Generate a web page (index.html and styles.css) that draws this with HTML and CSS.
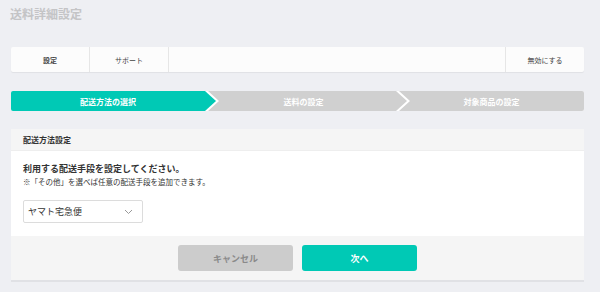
FILE: index.html
```html
<!DOCTYPE html>
<html lang="ja">
<head>
<meta charset="utf-8">
<link rel="stylesheet" href="styles.css">
</head>
<body>
<div class="page">
  <h1 class="title">送料詳細設定</h1>
  <div class="tabs">
    <div class="tab tab-active">設定</div>
    <div class="tab">サポート</div>
    <div class="tab-spacer"></div>
    <div class="tab tab-end">無効にする</div>
  </div>
  <div class="steps">
    <div class="step step-1 step-current">配送方法の選択</div>
    <div class="step step-2">送料の設定</div>
    <div class="step step-3">対象商品の設定</div>
  </div>
  <div class="panel">
    <div class="panel-head">配送方法設定</div>
    <div class="panel-body">
      <p class="lead">利用する配送手段を設定してください。</p>
      <p class="note">※「その他」を選べば任意の配送手段を追加できます。</p>
      <div class="select">
        <span>ヤマト宅急便</span>
        <svg class="chev" width="9" height="6" viewBox="0 0 9 6"><path d="M1 1 L4.5 4.5 L8 1" fill="none" stroke="#999" stroke-width="1"/></svg>
      </div>
    </div>
    <div class="panel-foot">
      <div class="btn btn-cancel">キャンセル</div>
      <div class="btn btn-next">次へ</div>
    </div>
  </div>
</div>
</body>
</html>
```
FILE: styles.css
```css
html, body {
  margin: 0;
  padding: 0;
  background: #eeeff3;
  font-family: "Noto Sans CJK JP", "Noto Sans", sans-serif;
  color: #333;
}
.page {
  width: 573px;
  padding: 0 0 0 11px;
}
.title {
  margin: 0;
  padding: 5px 0 0 0;
  height: 42px;
  box-sizing: border-box;
  font-size: 12px;
  line-height: 17px;
  font-weight: bold;
  color: #c4c4c6;
  margin-left: -1px;
}
.tabs {
  display: flex;
  height: 25px;
  background: #fcfcfc;
  border-radius: 2px;
  box-shadow: 0 1px 1px rgba(0,0,0,0.06);
  margin-top: 5px;
}
.tab {
  width: 78px;
  display: flex;
  align-items: center;
  justify-content: center;
  font-size: 7px;
  color: #444;
  border-right: 1px solid #e6e6e6;
}
.tab-active { font-weight: bold; }
.tab-spacer { flex: 1; }
.tab-end { border-right: none; border-left: 1px solid #e6e6e6; }
.steps {
  display: flex;
  height: 20px;
  margin-top: 19px;
  background: #ffffff;
  border-radius: 2px;
  overflow: hidden;
}
.step {
  display: flex;
  align-items: center;
  justify-content: center;
  font-size: 8px;
  font-weight: bold;
  color: #fff;
  background: #d0d0d0;
  box-sizing: border-box;
}
.step-current { background: #00c9b5; }
.step-1 {
  width: 205px;
  padding-right: 11px;
  clip-path: polygon(0 0, calc(100% - 11px) 0, 100% 50%, calc(100% - 11px) 100%, 0 100%);
}
.step-2 {
  width: 199px;
  margin-left: -8px;
  padding-right: 8px;
  clip-path: polygon(0 0, calc(100% - 11px) 0, 100% 50%, calc(100% - 11px) 100%, 0 100%, 11px 50%);
}
.step-3 {
  flex: 1;
  margin-left: -8px;
  clip-path: polygon(0 0, 100% 0, 100% 100%, 0 100%, 11px 50%);
}
.panel {
  margin-top: 18px;
  background: #fff;
  border-bottom: 2px solid #e0e1e5;
}
.panel-head {
  height: 22px;
  background: #f5f5f5;
  font-size: 8px;
  font-weight: bold;
  display: flex;
  align-items: center;
  padding-left: 12px;
  border-bottom: 1px solid #eeeeee;
  box-sizing: border-box;
}
.panel-body {
  height: 85px;
  box-sizing: border-box;
  padding: 11px 12px 0 12px;
}
.lead {
  margin: 0;
  font-size: 9px;
  line-height: 14px;
  font-weight: bold;
  color: #333;
}
.note {
  margin: 0;
  font-size: 7.5px;
  line-height: 12px;
  color: #333;
}
.select {
  margin-top: 12px;
  width: 120px;
  height: 23px;
  box-sizing: border-box;
  border: 1px solid #dcdcdc;
  border-radius: 2px;
  display: flex;
  align-items: center;
  justify-content: space-between;
  padding: 0 9px 0 4px;
  font-size: 9px;
  color: #333;
}
.chev { display: block; }
.panel-foot {
  height: 44px;
  background: #f5f5f5;
  display: flex;
  align-items: center;
  justify-content: center;
  gap: 9px;
}
.btn {
  width: 115px;
  height: 26px;
  border-radius: 3px;
  display: flex;
  align-items: center;
  justify-content: center;
  font-size: 9px;
  font-weight: bold;
}
.btn-cancel { background: #cccccc; color: #8a8a8a; }
.btn-next { background: #00c9b5; color: #fff; }
```
